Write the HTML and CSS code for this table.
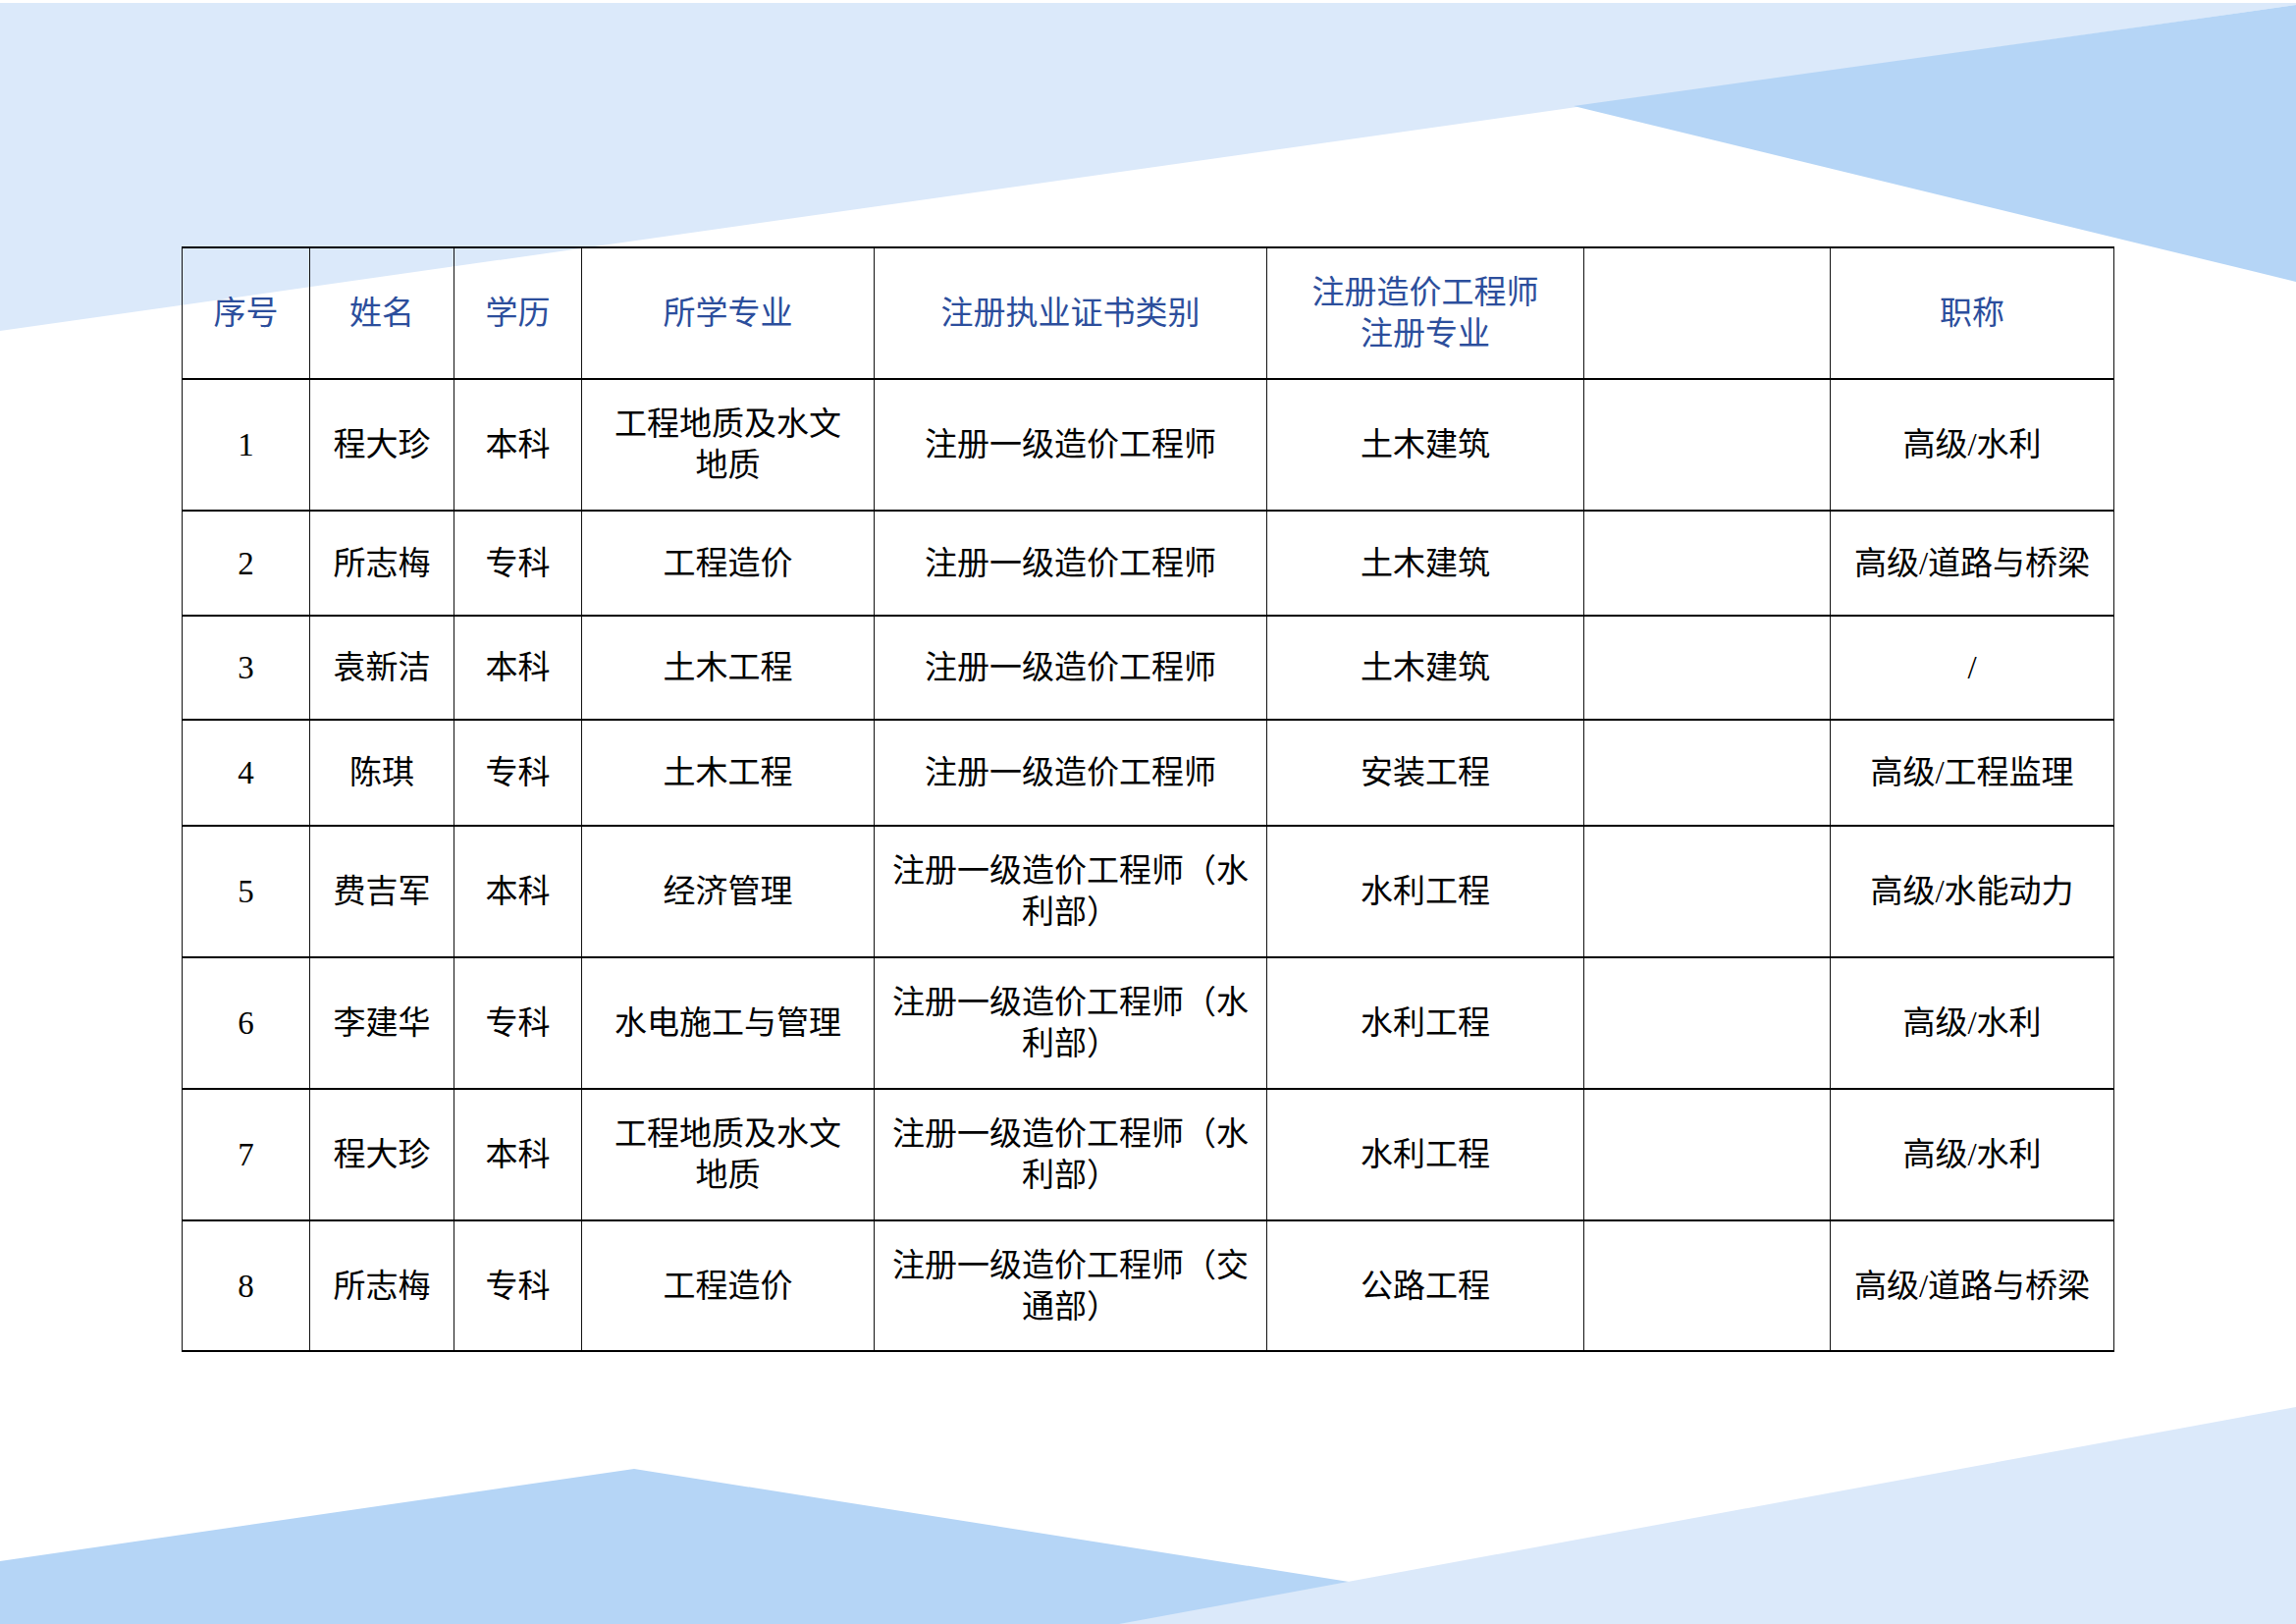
FILE: index.html
```html
<!DOCTYPE html>
<html lang="zh-CN">
<head>
<meta charset="utf-8">
<title>人员表</title>
<link rel="stylesheet" href="styles.css">
</head>
<body>
<div class="page">
  <svg class="bg" viewBox="0 0 2339 1654" width="2339" height="1654" aria-hidden="true">
    <polygon class="light" points="0,3 2339,3 2339,5 0,337"/>
    <polygon class="dark" points="1603,108 2339,5 2339,287"/>
    <polygon class="dark" points="0,1590 646,1496 1646,1654 0,1654"/>
    <polygon class="light" points="1140,1654 2339,1433 2339,1654"/>
  </svg>
  <table class="staff">
    <colgroup>
      <col class="c1"><col class="c2"><col class="c3"><col class="c4">
      <col class="c5"><col class="c6"><col class="c7"><col class="c8">
    </colgroup>
    <thead>
      <tr class="tall head">
        <th>序号</th><th>姓名</th><th>学历</th><th>所学专业</th>
        <th>注册执业证书类别</th><th>注册造价工程师<br>注册专业</th><th></th><th>职称</th>
      </tr>
    </thead>
    <tbody>
      <tr class="tall">
        <td>1</td><td>程大珍</td><td>本科</td><td>工程地质及水文<br>地质</td>
        <td>注册一级造价工程师</td><td>土木建筑</td><td></td><td>高级/水利</td>
      </tr>
      <tr class="short r2">
        <td>2</td><td>所志梅</td><td>专科</td><td>工程造价</td>
        <td>注册一级造价工程师</td><td>土木建筑</td><td></td><td>高级/道路与桥梁</td>
      </tr>
      <tr class="short r3">
        <td>3</td><td>袁新洁</td><td>本科</td><td>土木工程</td>
        <td>注册一级造价工程师</td><td>土木建筑</td><td></td><td>/</td>
      </tr>
      <tr class="short r4">
        <td>4</td><td>陈琪</td><td>专科</td><td>土木工程</td>
        <td>注册一级造价工程师</td><td>安装工程</td><td></td><td>高级/工程监理</td>
      </tr>
      <tr class="tall">
        <td>5</td><td>费吉军</td><td>本科</td><td>经济管理</td>
        <td>注册一级造价工程师（水<br>利部）</td><td>水利工程</td><td></td><td>高级/水能动力</td>
      </tr>
      <tr class="tall">
        <td>6</td><td>李建华</td><td>专科</td><td>水电施工与管理</td>
        <td>注册一级造价工程师（水<br>利部）</td><td>水利工程</td><td></td><td>高级/水利</td>
      </tr>
      <tr class="tall">
        <td>7</td><td>程大珍</td><td>本科</td><td>工程地质及水文<br>地质</td>
        <td>注册一级造价工程师（水<br>利部）</td><td>水利工程</td><td></td><td>高级/水利</td>
      </tr>
      <tr class="tall last">
        <td>8</td><td>所志梅</td><td>专科</td><td>工程造价</td>
        <td>注册一级造价工程师（交<br>通部）</td><td>公路工程</td><td></td><td>高级/道路与桥梁</td>
      </tr>
    </tbody>
  </table>
</div>
</body>
</html>
```

FILE: styles.css
```css
html, body {
  margin: 0;
  padding: 0;
  background: #ffffff;
}

.page {
  position: relative;
  width: 2339px;
  height: 1654px;
  overflow: hidden;
  background: #ffffff;
  padding-top: 251px;
  padding-left: 185px;
  box-sizing: border-box;
}

.bg {
  position: absolute;
  left: 0;
  top: 0;
  z-index: 0;
}

.bg .light { fill: #dbe9fa; }
.bg .dark { fill: #b5d5f6; }

.staff {
  position: relative;
  z-index: 1;
  width: 1968px;
  table-layout: fixed;
  border-collapse: collapse;
  font-family: "Liberation Serif", "Noto Sans CJK SC", serif;
  font-size: 33px;
  line-height: 42px;
  color: #000000;
}

.c1 { width: 130px; }
.c2 { width: 147px; }
.c3 { width: 130px; }
.c4 { width: 298px; }
.c5 { width: 400px; }
.c6 { width: 323px; }
.c7 { width: 251px; }
.c8 { width: 289px; }

.staff th,
.staff td {
  padding: 0 10px;
  text-align: center;
  vertical-align: middle;
  font-weight: 400;
  border-left: 1px solid #111;
  border-right: 1px solid #111;
  border-top: 2px solid #000;
  border-bottom: 2px solid #000;
  white-space: nowrap;
}

.staff th {
  color: #2c4e9c;
}

.tall { height: 134px; }
.r2 { height: 107px; }
.r3 { height: 106px; }
.r4 { height: 108px; }
.last { height: 133px; }
```
